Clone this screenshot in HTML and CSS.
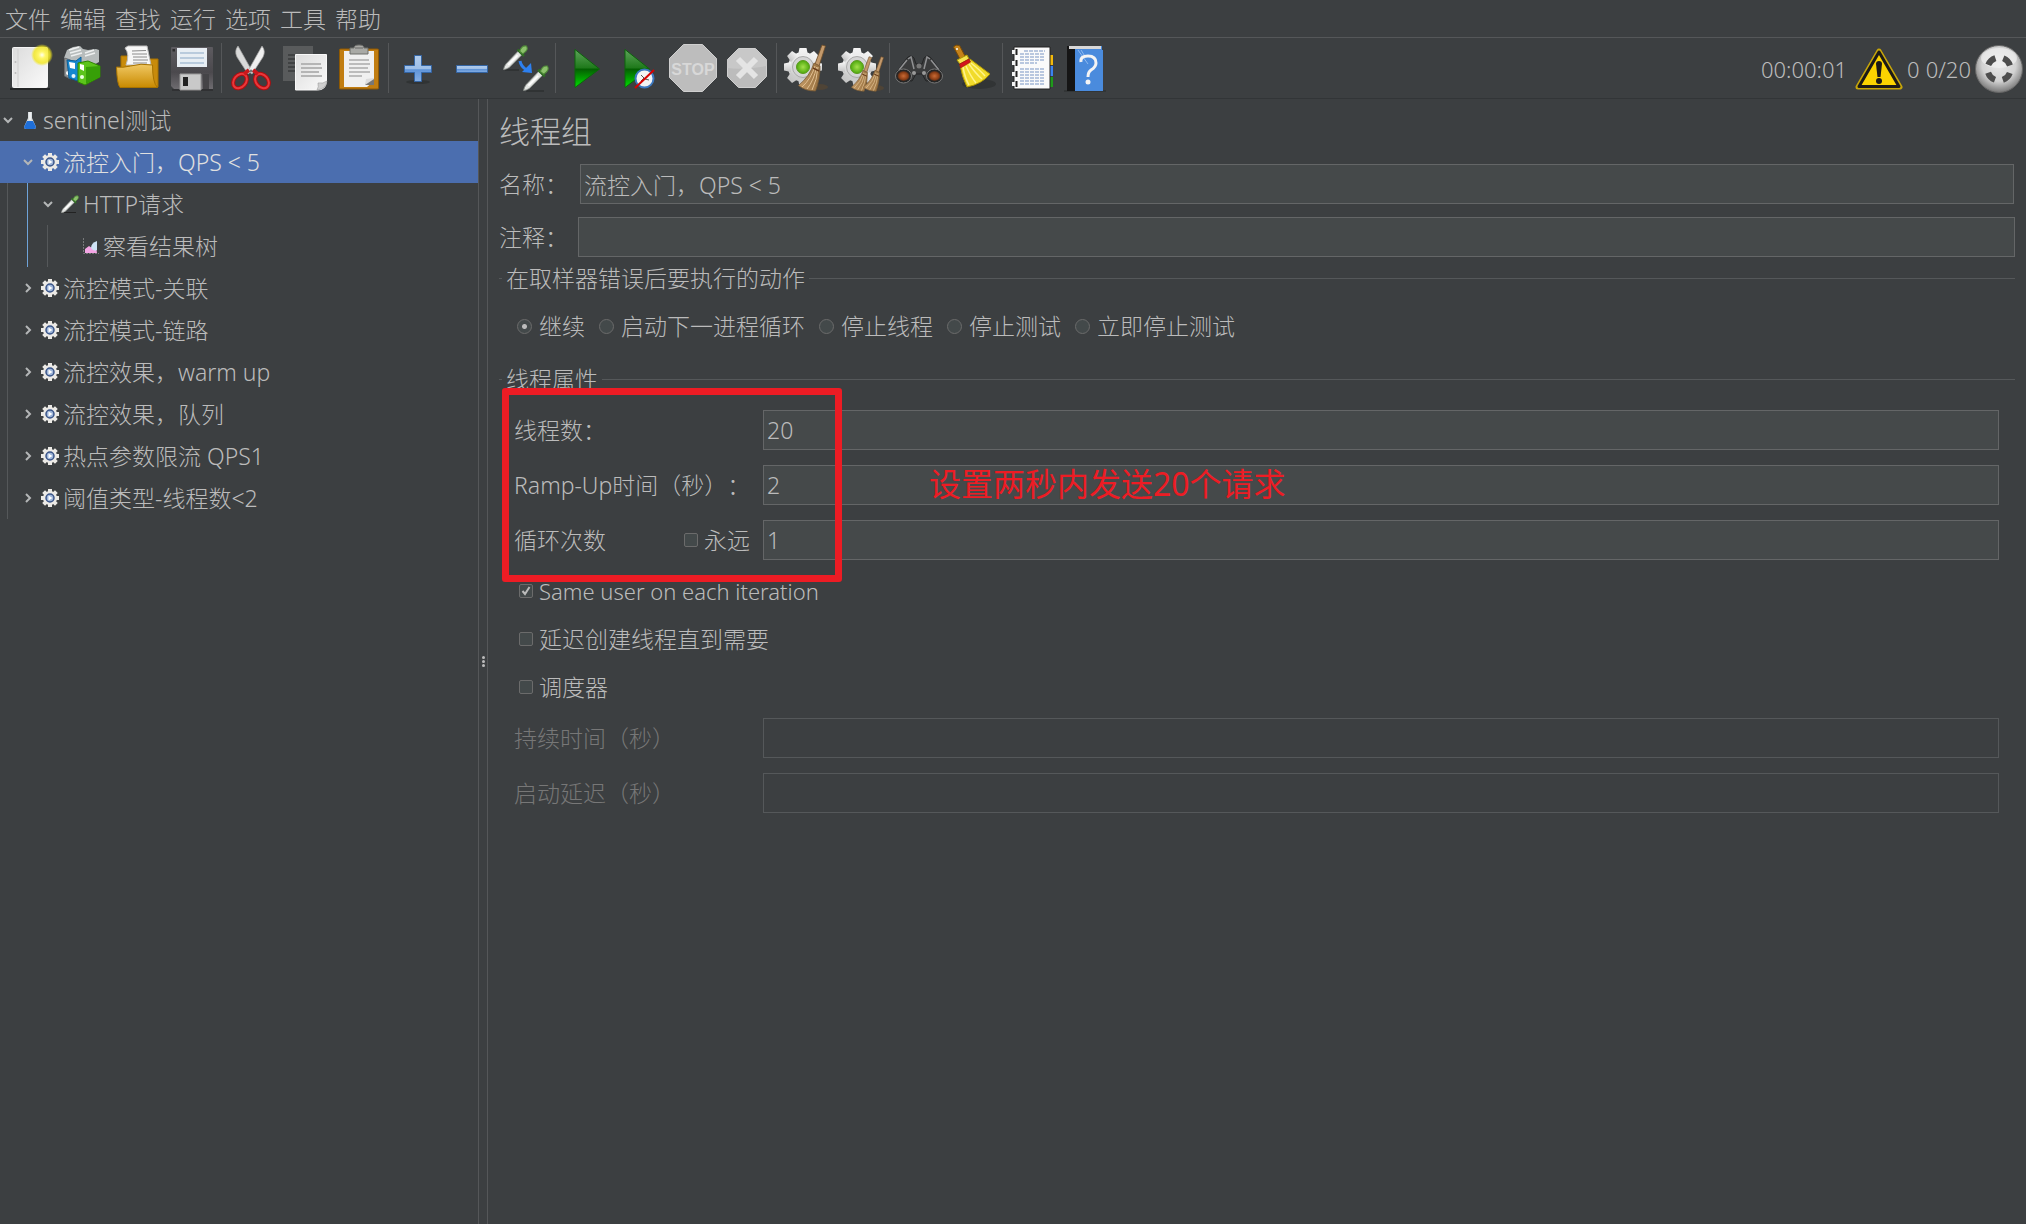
FILE: index.html
```html
<!DOCTYPE html>
<html lang="zh-CN">
<head>
<meta charset="utf-8">
<title>Apache JMeter</title>
<link rel="stylesheet" href="styles.css">
</head>
<body>
<svg class="defs" aria-hidden="true">
  <defs>
    <linearGradient id="paper" x1="0" y1="0" x2="1" y2="1"><stop offset="0" stop-color="#dcdcdc"/><stop offset="1" stop-color="#fafafa"/></linearGradient>
    <radialGradient id="glow"><stop offset="0" stop-color="#fffff0"/><stop offset=".3" stop-color="#fff76a"/><stop offset=".75" stop-color="#f2e71c" stop-opacity=".8"/><stop offset="1" stop-color="#f2e71c" stop-opacity="0"/></radialGradient>
    <linearGradient id="folder" x1="0" y1="0" x2="0" y2="1"><stop offset="0" stop-color="#f0c863"/><stop offset="1" stop-color="#c98a00"/></linearGradient>
    <linearGradient id="floppy" x1="0" y1="0" x2="0" y2="1"><stop offset="0" stop-color="#5d5b60"/><stop offset=".6" stop-color="#4b494d"/><stop offset="1" stop-color="#6e6c70"/></linearGradient>
    <linearGradient id="blue" x1="0" y1="0" x2="0" y2="1"><stop offset="0" stop-color="#b4cdec"/><stop offset=".5" stop-color="#9dbfe8"/><stop offset=".55" stop-color="#5f94d8"/><stop offset="1" stop-color="#86aee2"/></linearGradient>
    <linearGradient id="play" x1="0" y1="0" x2="0" y2="1"><stop offset="0" stop-color="#5fa35b"/><stop offset=".48" stop-color="#1f7a1b"/><stop offset=".52" stop-color="#045f02"/><stop offset="1" stop-color="#00e000"/></linearGradient>
    <radialGradient id="green"><stop offset="0" stop-color="#a4e04c"/><stop offset="1" stop-color="#4da80c"/></radialGradient>
    <linearGradient id="straw" x1="0" y1="0" x2="1" y2="0"><stop offset="0" stop-color="#c49a66"/><stop offset="1" stop-color="#97703f"/></linearGradient>
    <radialGradient id="lens"><stop offset="0" stop-color="#c96a35"/><stop offset=".7" stop-color="#8d3f16"/><stop offset="1" stop-color="#4a2a1c"/></radialGradient>
    <radialGradient id="ball" cx=".5" cy=".4" r=".6"><stop offset="0" stop-color="#e9e9e9"/><stop offset=".6" stop-color="#d2d2d2"/><stop offset="1" stop-color="#777"/></radialGradient>
    <linearGradient id="metal" x1="0" y1="0" x2="0" y2="1"><stop offset="0" stop-color="#f5f5f5"/><stop offset="1" stop-color="#c4c4c4"/></linearGradient>
    <symbol id="dropper" viewBox="0 0 24 24">
      <path d="M14.500 6 18 9.500 6 21.500Q3 23.500.5 23.500 1 20.500 3 18Z" fill="#e4e6e4" stroke="#8b908b" stroke-width=".8"/>
      <path d="M5 19 14 10" stroke="#fff" stroke-width="1.600"/>
      <path d="m13 5 6.500 6.500 1.500-2-6-6z" fill="#2f6b24"/>
      <path d="M16 6Q18 0 22.500 1 25 5 19 8.500Z" fill="#8cc16c" stroke="#4f8a38"/>
    </symbol>
    <symbol id="gear" viewBox="0 0 40 40">
      <g fill="url(#metal)">
        <circle cx="20" cy="20" r="15"/>
        <g id="teeth"><path d="M16.500 1h7l1.500 7H15zM16.500 39h7l1.500-7H15z"/><path d="M1 16.500v7l7 1.500V15zM39 16.500v7l-7 1.500V15z"/></g>
        <use href="#teeth" transform="rotate(45 20 20)"/>
      </g>
      <circle cx="20" cy="20" r="10.500" fill="#d5d5d5" stroke="#aaa"/>
      <circle cx="20" cy="20" r="6.500" fill="url(#green)" stroke="#5b9a1f"/>
    </symbol>
    <symbol id="broom" viewBox="0 0 28 48">
      <path d="M24 1 27.500 2 21 22 17 20Z" fill="#c49a6c" stroke="#6d4c28" stroke-width=".8"/>
      <path d="M16 19 22 22Q22 36 17.500 47 7 47 .5 41.500 12 32 16 19Z" fill="url(#straw)" stroke="#7a5a34" stroke-width=".8"/>
      <path d="M17 22Q13 35 4 43M18.500 23Q16 36 9 45M20 23Q19 36 14 46" fill="none" stroke="#e2c193" stroke-width="1"/>
      <path d="M15 24 21 27" stroke="#6b3f1c" stroke-width="1.500"/>
    </symbol>
    <symbol id="cog" viewBox="0 0 18 18">
      <g fill="#eceae6"><circle cx="9" cy="9" r="7"/>
        <g id="cogteeth"><path d="M7 0h4v18H7z"/><path d="M0 7h18v4H0z"/></g>
        <use href="#cogteeth" transform="rotate(45 9 9)"/></g>
      <circle cx="9" cy="9" r="4" fill="#9db4d8" stroke="#3a5488" stroke-width="1.500"/>
      <path d="m7.500 6.500 4 2.500-4 2.500z" fill="#fff"/>
    </symbol>
  </defs>
</svg>

<nav class="menubar">
  <button>文件</button><button>编辑</button><button>查找</button><button>运行</button><button>选项</button><button>工具</button><button>帮助</button>
</nav>

<header class="toolbar">
  <div class="group">
    <button class="tool" aria-label="新建"><svg viewBox="0 0 48 48">
      <path d="M4 45h40" stroke="#242627" stroke-width="2"/><rect x="6.500" y="3.500" width="35" height="40" rx="1" fill="url(#paper)" stroke="#f4f4f4"/><path d="M12 5v38" stroke="#cfcfcf"/><circle cx="9.500" cy="18" r="1" fill="#bbb"/><circle cx="9.500" cy="29" r="1" fill="#bbb"/><circle cx="36" cy="11" r="11" fill="url(#glow)"/></svg></button>
    <button class="tool" aria-label="模板"><svg viewBox="0 0 48 48">
      <path d="M4 14 7 6 13 3 20 2l3 3 5 1 8-1 3 1v12L28 24 4 30Z" fill="#b7bcbc"/><path d="m9 6 10-3m-9 6 11-3m-10 6 11-3m3 0 9-3m-9 6 10-3" stroke="#eef0f0" stroke-width="1.500"/><path d="M4.500 14v18l6 3V16Z" fill="#8c9092" stroke="#6a6d70"/><circle cx="8" cy="29" r="2" fill="#fff"/>
      <path d="m7 16 9 1 5-4v20l-3 4-9-3Z" fill="#1688cf" stroke="#0b5f9a"/><path d="m9 18 6 1v6l-5-1z" fill="#fff"/><circle cx="13.500" cy="32" r="2" fill="#e8f4fb"/>
      <path d="M18 19 28 17 40 22V33L25 41 18 38Z" fill="#5cc41b" stroke="#2e8500"/><path d="M26 23 40 22V33L26 40Z" fill="#379f07"/><path d="m20 20 4 1v6l-4-2z" fill="#fff"/><circle cx="22" cy="33" r="2" fill="#eaffdf"/></svg></button>
    <button class="tool" aria-label="打开"><svg viewBox="0 0 48 48">
      <path d="M7 12h10l2 3h25v28H7z" fill="#c88b0b" stroke="#a87300"/><path d="M14 2h19l4 19H12Q16 10 11 4Z" fill="#f7f7f7" stroke="#bbb"/><path d="m18 7 14-.5M18 10h15M19 13h14M19 16h15M19 19h14" stroke="#8a8a8a"/><path d="M2.500 23q6 1 14-1 10-3 22-1 0 18 5 22.500H6Q3 40 2.500 23Z" fill="url(#folder)" stroke="#a87300"/></svg></button>
    <button class="tool" aria-label="保存"><svg viewBox="0 0 48 48">
      <path d="M4 3h40q1 0 1 1v41H6l-3-3V4q0-1 1-1z" fill="url(#floppy)"/><path d="M4 46h41" stroke="#242526"/><path d="M9 4h30v19H9z" fill="#e8eef4"/><path d="M12 9h24M12 14h24M12 19h24" stroke="#8ba8c6"/><path d="M4.500 5h2.500v2.500H4.500z" fill="#2b2b2c"/><path d="M12 30h21v16H12z" fill="#c9c9c9" stroke="#999"/><path d="M15 33h5v9h-5z" fill="#222"/><path d="M35 30h6v15h-6" fill="#454447"/></svg></button>
  </div>
  <div class="group">
    <button class="tool" aria-label="剪切"><svg viewBox="0 0 48 48">
      <path d="M11 2Q7 7 10 13L21 30l4-3Z" fill="#d9dada" stroke="#a6a6a6" stroke-width=".7"/><path d="M35 2q4 5 1 11L25 30l-4-3Z" fill="#f0f0f0" stroke="#a6a6a6" stroke-width=".7"/>
      <g fill="none" stroke="#b40b0f" stroke-width="4"><ellipse cx="13" cy="37" rx="6" ry="8" transform="rotate(40 13 37)"/><ellipse cx="35" cy="37" rx="6" ry="8" transform="rotate(-40 35 37)"/></g>
      <g fill="none" stroke="#e8393b" stroke-width="2"><ellipse cx="13" cy="37" rx="6" ry="8" transform="rotate(40 13 37)"/><ellipse cx="35" cy="37" rx="6" ry="8" transform="rotate(-40 35 37)"/></g>
      <path d="m17 30 5-4M31 30l-5-4" stroke="#c9181c" stroke-width="4"/><circle cx="24" cy="27" r="1.500" fill="#777"/></svg></button>
    <button class="tool" aria-label="复制"><svg viewBox="0 0 48 48">
      <path d="M2 2h30v35H2z" fill="#595b5c"/><path d="M7 11h8M7 15h7M7 19h8M7 23h7M7 27h8" stroke="#404243" stroke-width="2"/><path d="M14.500 10.500h31V38q-1 8-9 8h-22z" fill="url(#paper)" stroke="#f8f8f8"/><path d="M20 20h20M20 24h21M20 28h18M20 32h21" stroke="#b5b5b5" stroke-width="2"/><path d="M36 46q2-3 1-7 5 1 9-2-1 8-10 9Z" fill="#cfcfcf" stroke="#999" stroke-width=".6"/></svg></button>
    <button class="tool" aria-label="粘贴"><svg viewBox="0 0 48 48">
      <rect x="4.500" y="5" width="39" height="40" rx="1" fill="#c17d11" stroke="#8f5902"/><path d="M9 7h30v30l-7 6H9z" fill="#f0f0f0"/><path d="M14 16h20M14 20h21M14 24h19M14 28h21M14 32h13" stroke="#aaa" stroke-width="1.500"/><path d="m30 41 3-6h6v6z" fill="#777"/><path d="m30 41 9-6v-1l-8 1z" fill="#ddd"/><path d="M15 4h4q0-3 5-3t5 3h4v6H15z" fill="#a9aaa6" stroke="#6d6e6b"/><path d="M20 4h8" stroke="#666"/></svg></button>
  </div>
  <div class="group">
    <button class="tool" aria-label="展开"><svg viewBox="0 0 48 48"><ellipse cx="24" cy="38" rx="12" ry="2" fill="#303334"/><path d="M20.500 11.500h7v10h10v7h-10v9h-7v-9h-10v-7h10z" fill="url(#blue)" stroke="#3465a4"/></svg></button>
    <button class="tool" aria-label="折叠"><svg viewBox="0 0 48 48"><path d="M8.500 21.500h31v7h-31z" fill="url(#blue)" stroke="#3465a4"/></svg></button>
    <button class="tool" aria-label="切换"><svg viewBox="0 0 48 48"><path d="M3 26h14M24 47h18" stroke="#252829"/><use href="#dropper" x="1" y="1" width="25" height="25"/><use href="#dropper" x="21" y="21" width="26" height="26"/><path d="M18 17q1 6 7 9" fill="none" stroke="#2d80f0" stroke-width="3"/><path d="m20 28 10 1-1-10Z" fill="#2d80f0"/></svg></button>
  </div>
  <div class="group">
    <button class="tool" aria-label="启动"><svg viewBox="0 0 48 48"><path d="M14 5.500 38.500 25 14 43.500Z" fill="url(#play)" stroke="#0b660a"/></svg></button>
    <button class="tool" aria-label="不停顿开始"><svg viewBox="0 0 48 48"><path d="M10 5.500 34.500 25 10 43.500Z" fill="url(#play)" stroke="#0b660a"/><circle cx="29.500" cy="34.500" r="9" fill="#f3f3f3" stroke="#3c78c0" stroke-width="2"/><path d="m26 31 4 4 4 1M29 34l-3 3" stroke="#555" fill="none"/><path d="m20 44 19-18" stroke="#d80000" stroke-width="2"/></svg></button>
    <button class="tool" aria-label="停止"><svg viewBox="0 0 48 48"><path d="M14.500.500h19l14 14v19l-14 14h-19l-14-14v-19z" fill="#bdbdbd" stroke="#cfcfcf"/><text x="24" y="31" class="stop-text" text-anchor="middle">STOP</text></svg></button>
    <button class="tool" aria-label="关闭"><svg viewBox="0 0 48 48"><path d="M15.500 4.500h17l11 11v17l-11 11h-17l-11-11v-17z" fill="#bcbcbc" stroke="#cfcfcf"/><path d="M15.500 5h17l11 11v6Q20 26 4.500 24v-8z" fill="#c8c8c8"/><path d="m15 15 18 18M33 15 15 33" stroke="#e4e4e4" stroke-width="6"/></svg></button>
  </div>
  <div class="group">
    <button class="tool" aria-label="清除"><svg viewBox="0 0 48 48"><use href="#gear" x="1" y="3" width="40" height="40"/><ellipse cx="38" cy="43" rx="8" ry="3" fill="#4f4436"/><use href="#broom" x="16" y="0" width="28" height="48"/></svg></button>
    <button class="tool" aria-label="清除全部"><svg viewBox="0 0 48 48"><use href="#gear" x="1" y="3" width="40" height="40"/><ellipse cx="40" cy="44" rx="8" ry="3" fill="#4f4436"/><use href="#broom" x="15" y="12" width="21" height="36"/><use href="#broom" x="27" y="12" width="21" height="36"/></svg></button>
  </div>
  <div class="group">
    <button class="tool" aria-label="查找"><svg viewBox="0 0 48 48"><path d="M1 29 12 14q4-4 7 0l2 6h6l2-6q3-4 7 0l11 15-2 7-14 1-4-7h-6l-4 7-14-1z" fill="#3a3b3c" stroke="#242526"/><path d="m13 15 3-2 3 12M35 15l-3-2-3 12M4 26l8-10M44 26l-8-10" fill="none" stroke="#909193" stroke-width="1.500"/><circle cx="24" cy="22" r="2.500" fill="#777"/><ellipse cx="8.500" cy="32" rx="8" ry="7" fill="#252525" stroke="#777"/><ellipse cx="39.500" cy="32" rx="8" ry="7" fill="#252525" stroke="#777"/><ellipse cx="8.500" cy="32" rx="6" ry="5" fill="url(#lens)"/><ellipse cx="39.500" cy="32" rx="6" ry="5" fill="url(#lens)"/><circle cx="19" cy="29" r="2" fill="#999"/><circle cx="29" cy="29" r="2" fill="#999"/></svg></button>
    <button class="tool" aria-label="重置"><svg viewBox="0 0 48 48"><ellipse cx="30" cy="40" rx="17" ry="5" fill="#313435"/><path d="M4.500 3q2-3 6-1.500L16 12l-5 3Z" fill="#c4821a" stroke="#7a4b06"/><circle cx="8" cy="5" r="1" fill="#fff"/><path d="M8 16 18 11l2 4-9 5Z" fill="#f5e451" stroke="#b29a00"/><path d="M11 21 21 15l20 15Q33 40 18 43Q13 33 11 21Z" fill="#f1db2b" stroke="#ad9400"/><path d="M14 23q2 11 6 18M17 22q5 11 10 17M20 20q7 10 13 15M22 19q9 7 14 13" fill="none" stroke="#fff38a" stroke-width="1.500"/><path d="m10.500 20 9.500-5 1.500 3-10 6Z" fill="#d4141c" stroke="#8e0b10" stroke-width=".6"/></svg></button>
  </div>
  <div class="group">
    <button class="tool" aria-label="函数助手"><svg viewBox="0 0 48 48"><path d="M41 11h4v10h-4z" fill="#f3b90b"/><path d="M41 22h4v10h-4z" fill="#3b82f0"/><path d="M41 33h4v10h-4z" fill="#1f9a1b"/><path d="M6 3h36v42H6z" fill="#fafafa" stroke="#222"/><path d="M16 7h21M12 10h25M12 13h24M12 16h25M12 19h17M12 25h25M12 28h24M12 31h25M12 34h24M12 37h25M12 40h24" stroke="#7895c4" stroke-dasharray="4 1"/><path d="M4 8h5M4 19h5M4 30h5M4 40h5" stroke="#f4f4f4" stroke-width="4"/><path d="M8.500 5v6M8.500 16v6M8.500 27v6M8.500 37v6" stroke="#222" stroke-width="2"/></svg></button>
    <button class="tool" aria-label="帮助"><svg viewBox="0 0 48 48"><path d="M2 47h42" stroke="#292c2d"/><path d="M5 2h8v45H5z" fill="#151515"/><path d="M13 2h27v4h1v41H13z" fill="#4a8bdd"/><path d="M7 2h32v3H7z" fill="#d8d8d8"/><path d="m16 6 10 14M19 6l5 8" stroke="#8fbaf0"/><path d="M19 18q-1-6 7-6 8 0 8 7 0 4-5 7-3 2-3 7" fill="none" stroke="#f4f4f4" stroke-width="3"/><circle cx="26" cy="38" r="2.500" fill="#f4f4f4"/></svg></button>
  </div>
  <div class="status">
    <span>00:00:01</span>
    <svg class="warn" viewBox="0 0 48 42"><path d="M24 3 45 39H3Z" fill="#fbd300" stroke="#c7a60a" stroke-width="5" stroke-linejoin="round"/><path d="M24 4 44 38.500H4Z" fill="#fbd300" stroke="#1c1a17" stroke-width="3" stroke-linejoin="round"/><path d="M24 13q3 0 3 3l-1.500 13h-3L21 16q0-3 3-3z" fill="#1c1a17"/><circle cx="24" cy="33" r="3" fill="#1c1a17"/></svg>
    <span>0</span><span class="threads">0/20</span>
    <svg class="ball" viewBox="0 0 48 48"><circle cx="24" cy="24" r="23.500" fill="url(#ball)" stroke="#666"/><ellipse cx="24" cy="13" rx="18" ry="10" fill="#f3f3f3" opacity=".6"/><circle cx="24" cy="24" r="11.500" fill="none" stroke="#4d4d4d" stroke-width="6" stroke-dasharray="10.060 8" stroke-dashoffset="-4"/></svg>
  </div>
</header>

<main class="workspace">
  <aside class="tree">
    <ul>
      <li><div class="row"><svg class="chev" viewBox="0 0 10 10"><path d="m1 3 4 4 4-4"/></svg><svg class="node" viewBox="0 0 18 18"><path d="M7 1h4v6l4 9q0 2-2 2H5q-2 0-2-2l4-9z" fill="#d8dde0"/><path d="M6 10h6l3 6q0 2-2 2H5q-2 0-2-2z" fill="#1f6fd8"/><path d="M9 1v8" stroke="#fff"/></svg>sentinel测试</div>
      <ul class="level">
        <li><div class="row selected"><svg class="chev" viewBox="0 0 10 10"><path d="m1 3 4 4 4-4"/></svg><svg class="node" viewBox="0 0 18 18"><use href="#cog"/></svg>流控入门，QPS &lt; 5</div>
          <ul class="level active">
            <li><div class="row"><svg class="chev" viewBox="0 0 10 10"><path d="m1 3 4 4 4-4"/></svg><svg class="node" viewBox="0 0 18 18"><path d="M1 17.500h14" stroke="#222"/><use href="#dropper" width="18" height="18"/></svg>HTTP请求</div>
              <ul class="level">
                <li><div class="row"><span class="chev"></span><svg class="node" viewBox="0 0 18 18"><path d="M2.500 1v15.500H18" fill="none" stroke="#77797a" stroke-dasharray="2 1"/><path d="M4 12 8 9l3 2 4-2 1 7H4z" fill="#f4a5e4"/><path d="M10 11q0-5 6-7v9q-3 2-6-2z" fill="#cfe3f5"/></svg>察看结果树</div></li>
              </ul>
            </li>
          </ul>
        </li>
        <li><div class="row"><svg class="chev" viewBox="0 0 10 10"><path d="m3 1 4 4-4 4"/></svg><svg class="node" viewBox="0 0 18 18"><use href="#cog"/></svg>流控模式-关联</div></li>
        <li><div class="row"><svg class="chev" viewBox="0 0 10 10"><path d="m3 1 4 4-4 4"/></svg><svg class="node" viewBox="0 0 18 18"><use href="#cog"/></svg>流控模式-链路</div></li>
        <li><div class="row"><svg class="chev" viewBox="0 0 10 10"><path d="m3 1 4 4-4 4"/></svg><svg class="node" viewBox="0 0 18 18"><use href="#cog"/></svg>流控效果，warm up</div></li>
        <li><div class="row"><svg class="chev" viewBox="0 0 10 10"><path d="m3 1 4 4-4 4"/></svg><svg class="node" viewBox="0 0 18 18"><use href="#cog"/></svg>流控效果，队列</div></li>
        <li><div class="row"><svg class="chev" viewBox="0 0 10 10"><path d="m3 1 4 4-4 4"/></svg><svg class="node" viewBox="0 0 18 18"><use href="#cog"/></svg>热点参数限流 QPS1</div></li>
        <li><div class="row"><svg class="chev" viewBox="0 0 10 10"><path d="m3 1 4 4-4 4"/></svg><svg class="node" viewBox="0 0 18 18"><use href="#cog"/></svg>阈值类型-线程数&lt;2</div></li>
      </ul></li>
    </ul>
  </aside>
  <div class="splitter"><i></i><i></i><i></i></div>
  <form class="editor">
    <h1>线程组</h1>
    <div class="field name"><label for="name">名称：</label><input id="name" type="text" value="流控入门，QPS &lt; 5"></div>
    <div class="field comment"><label for="comment">注释：</label><input id="comment" type="text"></div>
    <section class="panel">
      <h2>在取样器错误后要执行的动作</h2>
      <div class="radios">
        <label><input type="radio" name="action" checked>继续</label>
        <label><input type="radio" name="action">启动下一进程循环</label>
        <label><input type="radio" name="action">停止线程</label>
        <label><input type="radio" name="action">停止测试</label>
        <label><input type="radio" name="action">立即停止测试</label>
      </div>
    </section>
    <section class="panel">
      <h2>线程属性</h2>
      <div class="props">
        <div class="prop"><label for="threads">线程数：</label><input id="threads" type="text" value="20"></div>
        <div class="prop"><label for="ramp">Ramp-Up时间（秒）：</label><input id="ramp" type="text" value="2"></div>
        <div class="prop"><div class="loop"><label for="loops">循环次数</label><label class="check"><input type="checkbox">永远</label></div><input id="loops" type="text" value="1"></div>
        <div class="frame"></div>
        <div class="note">设置两秒内发送20个请求</div>
      </div>
      <div class="checks">
        <label class="check latin"><input type="checkbox" checked>Same user on each iteration</label>
        <label class="check"><input type="checkbox">延迟创建线程直到需要</label>
        <label class="check"><input type="checkbox">调度器</label>
      </div>
      <div class="props">
        <div class="prop off"><label for="duration">持续时间（秒）</label><input id="duration" type="text" disabled></div>
        <div class="prop off"><label for="delay">启动延迟（秒）</label><input id="delay" type="text" disabled></div>
      </div>
    </section>
  </form>
</main>
</body>
</html>
```
FILE: styles.css
```css
* { box-sizing: border-box; }
body {
  margin: 0;
  min-height: 100vh;
  display: flex;
  flex-direction: column;
  background: #3c3f41;
  color: #bbb;
  font: 300 23px/32px "Noto Sans", "Noto Sans CJK SC", sans-serif;
  white-space: nowrap;
  text-spacing-trim: space-all;
}
button, input { font: inherit; color: inherit; }
button { padding: 0; border: 0; background: none; }
ul { list-style: none; margin: 0; padding: 0; }
svg { display: block; flex: none; }
.defs { position: absolute; width: 0; height: 0; }

.menubar {
  display: flex;
  gap: 9px;
  height: 38px;
  padding: 0 5px;
  border-bottom: 1px solid #555759;
}

.toolbar {
  display: flex;
  height: 61px;
  padding-left: 3px;
  border-bottom: 1px solid #323537;
}
.group { display: flex; padding-right: 5px; }
.group:not(:nth-last-child(2)) {
  background: linear-gradient(#555759, #555759) right 2px center / 1px 50px no-repeat;
}
.tool {
  width: 54px;
  height: 60px;
  display: grid;
  place-items: center;
}
.tool svg { width: 48px; height: 48px; }
.stop-text { font: 700 16px "Liberation Sans Narrow", "Liberation Sans", sans-serif; fill: #d8d8d8; }
.status {
  display: flex;
  align-items: center;
  gap: 4px;
  margin-left: auto;
  padding: 2px 3px 0 0;
}
.status, .latin { font-size: 22px; }
.warn { width: 48px; height: 42px; margin-left: 4px; }
.threads { margin-left: 2px; }
.ball { width: 48px; height: 48px; }

.workspace { flex: 1; display: flex; }
.tree { width: 478px; flex: none; overflow: hidden; }
.row {
  display: flex;
  align-items: center;
  height: 42px;
  padding-left: 3px;
}
.chev {
  width: 10px;
  height: 10px;
  margin-right: 8px;
  flex: none;
  fill: none;
  stroke: #b4b6b7;
  stroke-width: 2;
}
.node { width: 18px; height: 18px; margin-right: 4px; }
.level { margin-left: 7px; border-left: 1px solid #55585a; }
.level .row { padding-left: 15px; }
.level .level { margin-left: 19px; }
.level .level.active { border-color: #6fa3d8; }
.selected { background: #4b6eaf; box-shadow: -8px 0 #4b6eaf; color: #e0e0e0; }

.splitter {
  width: 10px;
  flex: none;
  display: flex;
  flex-direction: column;
  align-items: center;
  justify-content: center;
  gap: 1px;
  border: solid #555759;
  border-width: 0 1px;
}
.splitter i { width: 3px; height: 3px; border-radius: 50%; background: #bbb; }

.editor { flex: 1; min-width: 0; padding: 11px 11px 0; }
h1 { margin: 0 0 11px; font: inherit; font-size: 31px; line-height: 43px; }
input[type="text"] {
  flex: 1;
  min-width: 0;
  height: 40px;
  padding: 0 3px;
  border: 1px solid #646667;
  border-radius: 0;
  background: #45494a;
}
.field { display: flex; align-items: center; margin-bottom: 13px; }
.field label { width: 79px; }
.name { padding: 0 1px 0 0; }
.name label { width: 81px; }
.comment { margin-bottom: 5px; }

h2 {
  display: flex;
  align-items: center;
  gap: 4px;
  margin: 0;
  font: inherit;
}
h2::before, h2::after { content: ""; height: 1px; background: #55585a; }
h2::before { width: 3px; }
h2::after { flex: 1; }
.radios { display: flex; gap: 14px; padding: 16px 18px 0; }
.radios label { display: flex; align-items: center; gap: 7px; }
.panel + .panel { margin-top: 21px; }
input[type="radio"], input[type="checkbox"] {
  appearance: none;
  flex: none;
  margin: 0;
  border: 1px solid #6b6b6b;
  background: #43494a;
}
input[type="radio"] { width: 15px; height: 15px; border-radius: 50%; }
input[type="radio"]:checked { background: radial-gradient(#bbb 2px, #43494a 3px); }
input[type="checkbox"] { width: 14px; height: 14px; border-radius: 2px; }
input[type="checkbox"]:checked {
  background: #43494a url("data:image/svg+xml,%3Csvg xmlns='http://www.w3.org/2000/svg' viewBox='0 0 12 12'%3E%3Cpath d='M2.500 6 5 9l4.500-7' fill='none' stroke='%23bbb' stroke-width='2'/%3E%3C/svg%3E");
}

.props {
  position: relative;
  display: flex;
  flex-direction: column;
  gap: 15px;
  padding: 15px 16px 0 15px;
}
.prop { display: flex; align-items: center; }
.prop > :first-child { width: 249px; flex: none; }
.loop { display: flex; justify-content: space-between; padding-right: 13px; }
.check { display: flex; align-items: center; gap: 6px; }
.checks {
  display: flex;
  flex-direction: column;
  align-items: flex-start;
  gap: 16px;
  padding: 15px 20px 0;
}
.off { color: #777; }
.off input[type="text"] { border-color: #55585a; background: none; }
.frame {
  position: absolute;
  left: 3px;
  top: -7px;
  width: 340px;
  height: 194px;
  border: 7px solid #ed1c24;
  border-radius: 3px;
}
.note {
  position: absolute;
  left: 430px;
  top: 69px;
  color: #ed1c24;
  font-size: 32px;
  line-height: 40px;
  font-weight: 400;
}
```
